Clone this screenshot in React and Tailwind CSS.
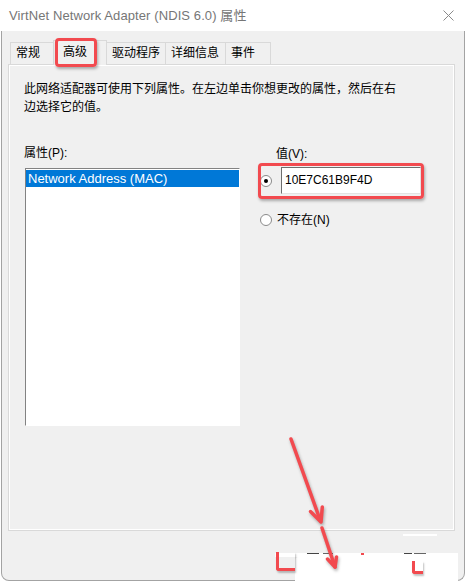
export default function App() {
  return (
    <div className="relative w-[465px] h-[581px] bg-white overflow-hidden font-['Liberation_Sans','Noto_Sans_CJK_SC',sans-serif] text-black">
      {/* title bar */}
      <div className="h-[31px] flex items-center justify-between pl-[9px] pr-[11px]">
        <span className="text-[13px] text-[#767676] whitespace-nowrap tracking-[0.1px]">VirtNet Network Adapter (NDIS 6.0) 属性</span>
        <svg width="11" height="11" viewBox="0 0 11 11">
          <path d="M0.5 0.5 L10.5 10.5 M10.5 0.5 L0.5 10.5" stroke="#8a8a8a" strokeWidth="1" />
        </svg>
      </div>

      {/* window body */}
      <div className="ml-[1px] w-[464px] h-[550px] bg-[#f0f0f0] border-x border-b border-[#a3a3a3] rounded-b-[8px] pt-[9px] pl-[6px] pr-[9px]">
        {/* tabs */}
        <div className="flex items-end h-[24px] pl-[2px] text-[12px]">
          <div className="h-[22px] w-[43px] border-t border-l border-[#d9d9d9] pl-[5px] leading-[21px]">常规</div>
          <div className="relative z-10 h-[25px] w-[54px] -mb-px border-t border-x border-[#d9d9d9] bg-[#f0f0f0] pl-[9px] leading-[22px]">高级</div>
          <div className="h-[22px] w-[59px] border-t border-r border-[#d9d9d9] pl-[5px] leading-[21px]">驱动程序</div>
          <div className="h-[22px] w-[60px] border-t border-r border-[#d9d9d9] pl-[5px] leading-[21px]">详细信息</div>
          <div className="h-[22px] w-[45px] border-t border-r border-[#d9d9d9] pl-[5px] leading-[21px]">事件</div>
        </div>

        {/* panel */}
        <div className="h-[467px] border border-[#d9d9d9] shadow-[inset_1px_1px_0_#ffffff,inset_-1px_-1px_0_#ffffff] pt-[15px] pl-[15px]">
          <div className="text-[12px] leading-[18px] whitespace-nowrap">
            <div>此网络适配器可使用下列属性。在左边单击你想更改的属性，然后在右</div>
            <div>边选择它的值。</div>
          </div>

          <div className="flex mt-[28px]">
            {/* left column */}
            <div className="flex flex-col">
              <div className="text-[12px] leading-[18px]">属性(P):</div>
              <div className="mt-[6px] ml-[1px] w-[215px] h-[258px] bg-white border-t border-l border-[#828282] border-b border-r border-b-white border-r-white pt-[1px]">
                <div className="h-[17px] bg-[#0078d7] text-white text-[13px] leading-[17px] pl-[2px] whitespace-nowrap">Network Address (MAC)</div>
              </div>
            </div>

            {/* right column */}
            <div className="flex flex-col ml-[20px]">
              <div className="text-[12px] leading-[18px] ml-[16px] mt-[1px]">值(V):</div>
              <div className="flex items-center mt-[4px]">
                <div className="w-[12px] h-[12px] rounded-full border border-[#8a8a8a] bg-white flex items-center justify-center">
                  <div className="w-[4px] h-[4px] rounded-full bg-black" />
                </div>
                <div className="ml-[9px] w-[140px] h-[27px] bg-white border-t border-l border-[#6e6e6e] border-b border-r border-b-[#e3e3e3] border-r-[#e3e3e3] pl-[3px] text-[12px] leading-[25px]">10E7C61B9F4D</div>
              </div>
              <div className="flex items-center mt-[17px] h-[18px]">
                <div className="w-[12px] h-[12px] rounded-full border border-[#8a8a8a] bg-white" />
                <span className="ml-[5px] text-[12px] leading-[18px]">不存在(N)</span>
              </div>
            </div>
          </div>
        </div>
      </div>

      {/* annotation: red boxes */}
      <div className="absolute z-20 left-[55px] top-[38px] w-[42px] h-[29px] border-[3px] border-[#f24a4f] rounded-[4px] shadow-[1px_2px_3px_rgba(0,0,0,0.3)]" />
      <div className="absolute z-20 left-[258px] top-[163px] w-[166px] h-[36px] border-[3px] border-[#f24a4f] rounded-[4px] shadow-[1px_2px_3px_rgba(0,0,0,0.3)]" />

      {/* erased bottom area */}
      <div className="absolute z-20 left-[403px] top-[534px] w-[34px] h-[2px] bg-white" />
      <div className="absolute z-20 left-[275px] top-[553px] w-[183px] h-[4px] bg-white" />
      <div className="absolute z-20 left-[307px] top-[553px] w-[12px] h-px bg-[#444]" />
      <div className="absolute z-20 left-[323px] top-[553px] w-[10px] h-px bg-[#666]" />
      <div className="absolute z-20 left-[404px] top-[553px] w-[8px] h-px bg-[#444]" />
      <div className="absolute z-20 left-[414px] top-[553px] w-[12px] h-px bg-[#666]" />
      <div className="absolute z-20 left-[361px] top-[553px] w-[3px] h-[2px] bg-[#f24a4f]" />
      <div className="absolute z-20 left-[295px] top-[557px] w-[163px] h-[24px] bg-white rounded-tl-[4px]" />
      <div className="absolute z-20 left-[276px] top-[552px] w-[19px] h-[19px] border-l-[3px] border-b-[3px] border-[#f24a4f] rounded-bl-[3px] shadow-[1px_2px_2px_rgba(0,0,0,0.25)]" />
      <div className="absolute z-20 left-[412px] top-[561px] w-[11px] h-[13px] border-l-[3px] border-b-[3px] border-[#f24a4f] rounded-bl-[3px] shadow-[1px_2px_2px_rgba(0,0,0,0.25)]" />

      {/* arrow */}
      <svg className="absolute z-30 left-0 top-0 pointer-events-none drop-shadow-[1px_2px_1.5px_rgba(0,0,0,0.3)]" width="465" height="581" viewBox="0 0 465 581">
        <g stroke="#f24a4f" strokeWidth="3.5" strokeLinecap="round" fill="none">
          <path d="M291 439 L320.5 521" />
          <path d="M310.5 511.5 L321 522 L322.3 507" strokeLinejoin="round" />
          <path d="M322 528 L335 567" />
          <path d="M327.5 559 L335 567 L336.5 557" strokeLinejoin="round" />
        </g>
      </svg>
    </div>
  );
}
